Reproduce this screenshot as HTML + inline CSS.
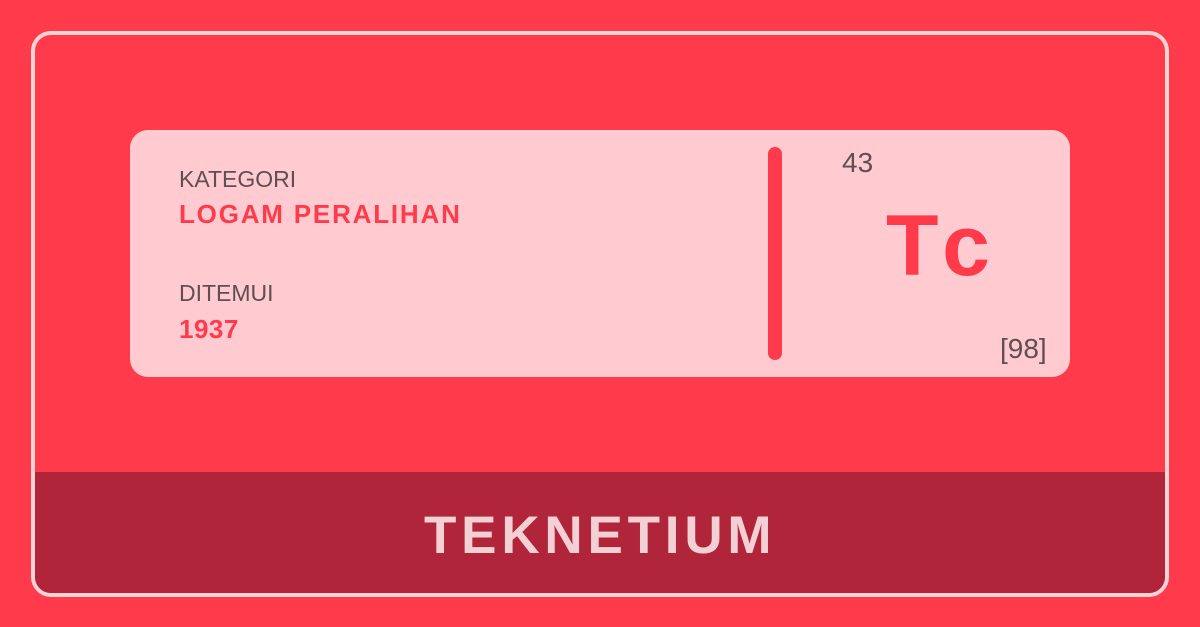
<!DOCTYPE html>
<html><head><meta charset="utf-8"><style>
*{margin:0;padding:0;box-sizing:border-box}
body{width:1200px;height:627px;background:#ff3b4b;position:relative;overflow:hidden;font-family:"Liberation Sans",sans-serif}
.frame{position:absolute;left:31px;top:31px;width:1138px;height:566px;border:4px solid #ffd3d6;border-radius:20px;overflow:hidden}
.band{position:absolute;left:0;right:0;top:437px;bottom:0;background:#b0253a}
.card{position:absolute;left:130px;top:130px;width:940px;height:247px;background:#ffcbd0;border-radius:18px}
.t{position:absolute;white-space:nowrap;line-height:1}
.g{color:#5d4f52}
.r{color:#ff3b4b;font-weight:bold}
.bar{position:absolute;left:768px;top:147px;width:14px;height:213px;background:#ff3b4b;border-radius:7px}
</style></head><body>
<div class="frame"><div class="band"></div></div>
<div class="card"></div>
<div class="t g" style="left:179px;top:168px;font-size:23px;letter-spacing:0px">KATEGORI</div>
<div class="t r" style="left:179px;top:201px;font-size:26px;letter-spacing:1.8px">LOGAM PERALIHAN</div>
<div class="t g" style="left:179px;top:282px;font-size:23px">DITEMUI</div>
<div class="t r" style="left:179px;top:316px;font-size:26px;letter-spacing:0.5px">1937</div>
<div class="bar"></div>
<div class="t g" style="left:842px;top:149px;font-size:28px">43</div>
<div class="t r" style="left:886px;top:203px;font-size:86px;letter-spacing:10px">Tc</div>
<div class="t g" style="left:1000px;top:335px;font-size:28px">[98]</div>
<div class="t" style="left:424px;top:509px;font-size:53px;font-weight:bold;color:#f3d0d4;letter-spacing:4.8px">TEKNETIUM</div>
</body></html>
